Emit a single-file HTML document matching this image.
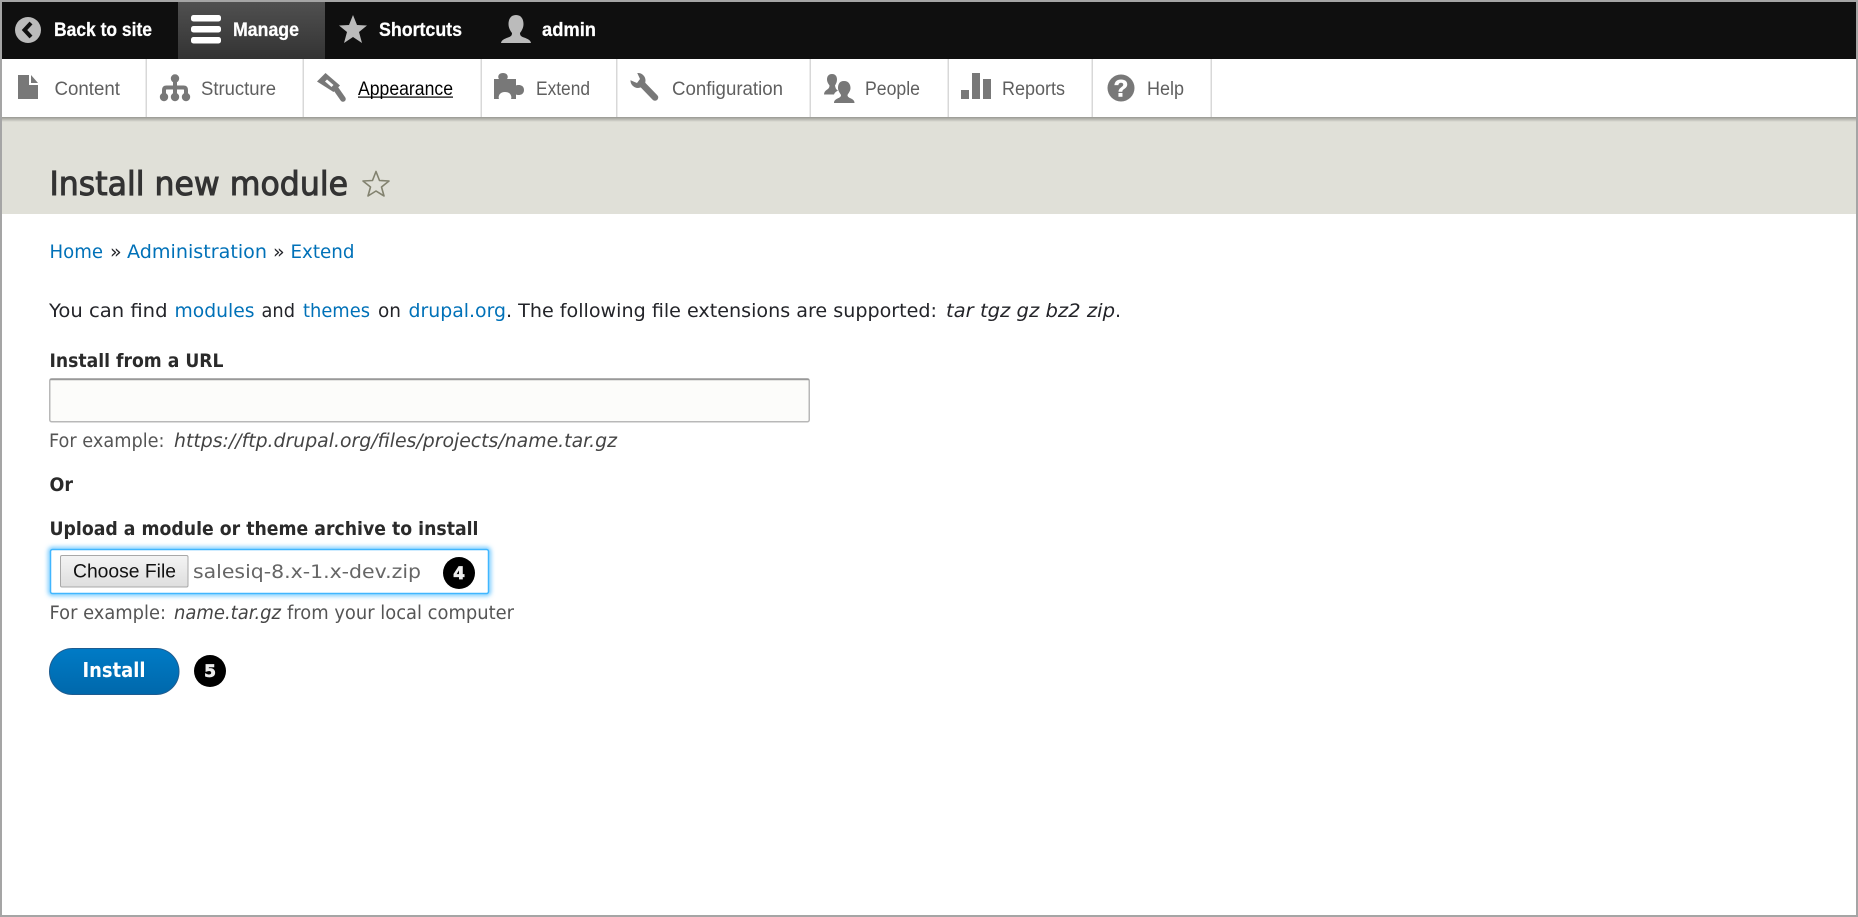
<!DOCTYPE html>
<html lang="en">
<head>
<meta charset="utf-8">
<title>Install new module</title>
<style>
html,body{margin:0;padding:0;width:1858px;height:917px;overflow:hidden;background:#fff}
svg{display:block;position:absolute;left:0;top:0}
text{white-space:pre}
.top{font:bold 19px "Liberation Sans",sans-serif;fill:#fff;stroke:#fff;stroke-width:.25}
.nav{font:19.5px "Liberation Sans",sans-serif;fill:#5f5f5f}
.b{font:19px "DejaVu Sans",sans-serif;fill:#232429}
.i{font:italic 19px "DejaVu Sans",sans-serif;fill:#232429}
.a{font:19px "DejaVu Sans",sans-serif;fill:#0071b8}
.l{font:bold 19px "DejaVu Sans",sans-serif;fill:#2a2a2a}
.d{font:18.5px "DejaVu Sans",sans-serif;fill:#555}
.di{font:italic 18.5px "DejaVu Sans",sans-serif;fill:#444}
.ic{fill:#787878}
</style>
</head>
<body>
<svg width="1858" height="917" viewBox="0 0 1858 917" xmlns="http://www.w3.org/2000/svg">
<defs>
<linearGradient id="mg" x1="0" y1="0" x2="0" y2="1"><stop offset="0" stop-color="#505050"/><stop offset="1" stop-color="#333"/></linearGradient>
<linearGradient id="sh" x1="0" y1="0" x2="0" y2="1"><stop offset="0" stop-color="#989892"/><stop offset="1" stop-color="#e0e0d8"/></linearGradient>
<linearGradient id="bt" x1="0" y1="0" x2="0" y2="1"><stop offset="0" stop-color="#007bc6"/><stop offset="1" stop-color="#0068ab"/></linearGradient>
<linearGradient id="cf" x1="0" y1="0" x2="0" y2="1"><stop offset="0" stop-color="#f4f4f4"/><stop offset="1" stop-color="#dedede"/></linearGradient>
<filter id="gl" x="-5%" y="-30%" width="110%" height="160%"><feGaussianBlur stdDeviation="2.5"/></filter>
</defs>

<rect width="1858" height="917" fill="#fff"/>

<!-- top bar -->
<rect x="0" y="2" width="1858" height="57" fill="#0f0f0f"/>
<rect x="178" y="2" width="147" height="57" fill="url(#mg)"/>
<circle cx="28" cy="30" r="13" fill="#bbb"/>
<path d="M31 23 L24.500 30 L31 37" fill="none" stroke="#0f0f0f" stroke-width="4"/>
<rect x="191" y="15" width="30" height="6.500" rx="2.500" fill="#fff"/>
<rect x="191" y="26" width="30" height="6.500" rx="2.500" fill="#fff"/>
<rect x="191" y="37" width="30" height="6.500" rx="2.500" fill="#fff"/>
<polygon points="353,15 357,25 367,25.500 359,32 362,43 353,37 344,43 347,32 339,25.500 349,25" fill="#bbb"/>
<path d="M516 15C510.500 15 508.500 19.500 508.500 24C508.500 28 510.500 31 512 33C512 35.500 511 36.500 508 37.500C504 39 501.500 40 501 43H531C530.500 40 528 39 524 37.500C521 36.500 520 35.500 520 33C521.500 31 523.500 28 523.500 24C523.500 19.500 521.500 15 516 15Z" fill="#bbb"/>
<text class="top" x="54" y="36" textLength="98" lengthAdjust="spacingAndGlyphs">Back to site</text>
<text class="top" x="233" y="36" textLength="66" lengthAdjust="spacingAndGlyphs">Manage</text>
<text class="top" x="379" y="36" textLength="83" lengthAdjust="spacingAndGlyphs">Shortcuts</text>
<text class="top" x="542" y="36" textLength="54" lengthAdjust="spacingAndGlyphs">admin</text>

<!-- nav -->
<rect x="0" y="59" width="1858" height="58" fill="#fff"/>
<g fill="#d8d8d8">
<rect x="145.500" y="59" width="1.500" height="58"/>
<rect x="302.500" y="59" width="1.500" height="58"/>
<rect x="480.500" y="59" width="1.500" height="58"/>
<rect x="616" y="59" width="1.500" height="58"/>
<rect x="809.500" y="59" width="1.500" height="58"/>
<rect x="947.500" y="59" width="1.500" height="58"/>
<rect x="1091.500" y="59" width="1.500" height="58"/>
<rect x="1210.500" y="59" width="1.500" height="58"/>
</g>
<!-- content -->
<path class="ic" d="M18 75H29V85H38V99H18Z"/><path class="ic" d="M31 75L38 83H31Z"/>
<!-- structure -->
<g class="ic"><circle cx="175" cy="78.500" r="4.200"/><circle cx="164" cy="97" r="4.200"/><circle cx="175" cy="97" r="4.200"/><circle cx="186" cy="97" r="4.200"/></g>
<path d="M175 79V97M164 97V90Q164 87.500 166.500 87.500H183.500Q186 87.500 186 90V97" fill="none" stroke="#787878" stroke-width="4"/>
<!-- appearance -->
<path class="ic" d="M317 81.500L325.500 73L340 85.500L333.500 92Z"/>
<path d="M325 81.500L327 79.500L333.500 85L331.500 87Z" fill="#fff"/>
<path d="M336 89L343 99" stroke="#787878" stroke-width="5.500" stroke-linecap="round"/>
<!-- extend -->
<path class="ic" d="M494 79H499C497.500 77.500 498 73 503 73C508 73 508.500 77.500 507 79H516V85.500C518 84.500 524 84.500 524 90C524 95.500 518 95.500 516 94.500V99H511C512 97 511 92 505 92C499 92 498 97 499 99H494Z"/>
<!-- config -->
<circle class="ic" cx="638" cy="80.500" r="7.500"/>
<path d="M641 83L655 97.500" stroke="#787878" stroke-width="6.500" stroke-linecap="round"/>
<polygon points="637,72.500 640,79 637,83 630,80 625,70 630,66" fill="#fff"/>
<!-- people -->
<path class="ic" d="M832 74C828 74 827 77 827 79.500C827 82 828.500 84 829.500 85.500C829.500 88 828 89 826.500 90C825 91 824 92.500 824 94.500H834C835 92 836.500 91.500 838 90.500C836 89.500 835.500 88 835 85.500C836 84 837 82 837 79.500C837 77 836 74 832 74Z"/>
<path class="ic" d="M844 81C839 81 838 85 838 88C838 91 840 93 841 95C841 97 839.500 97.500 837.500 98.500C835.500 99.500 834 100.500 834 103H854.500C854.500 100.500 853 99.500 851 98.500C849 97.500 847.500 97 847.500 95C848.500 93 850.500 91 850.500 88C850.500 85 849 81 844 81Z"/>
<!-- reports -->
<rect class="ic" x="961" y="90" width="8" height="9"/>
<rect class="ic" x="972" y="73" width="8" height="26"/>
<rect class="ic" x="983" y="79" width="8" height="20"/>
<!-- help -->
<circle class="ic" cx="1121" cy="88" r="13.500"/>
<text x="1121" y="96.500" text-anchor="middle" style="font:bold 24px 'Liberation Sans',sans-serif;fill:#fff;stroke:#fff;stroke-width:.6">?</text>

<text class="nav" x="54.500" y="95" textLength="65.500" lengthAdjust="spacingAndGlyphs">Content</text>
<text class="nav" x="201" y="95" textLength="75" lengthAdjust="spacingAndGlyphs">Structure</text>
<text class="nav" x="358" y="95" textLength="95" lengthAdjust="spacingAndGlyphs" style="fill:#000">Appearance</text>
<rect x="358" y="96.500" width="95" height="1.200" fill="#000"/>
<text class="nav" x="536" y="95" textLength="54" lengthAdjust="spacingAndGlyphs">Extend</text>
<text class="nav" x="672" y="95" textLength="111" lengthAdjust="spacingAndGlyphs">Configuration</text>
<text class="nav" x="865" y="95" textLength="55" lengthAdjust="spacingAndGlyphs">People</text>
<text class="nav" x="1002" y="95" textLength="63" lengthAdjust="spacingAndGlyphs">Reports</text>
<text class="nav" x="1147" y="95" textLength="37" lengthAdjust="spacingAndGlyphs">Help</text>

<!-- header -->
<rect x="0" y="117" width="1858" height="97" fill="#e0e0d8"/>
<rect x="0" y="117" width="1858" height="5" fill="url(#sh)"/>
<text x="49.500" y="195" textLength="298.500" lengthAdjust="spacingAndGlyphs" style="font:33px 'DejaVu Sans',sans-serif;fill:#333;stroke:#333;stroke-width:1">Install new module</text>
<polygon points="376,171.500 379.500,180.500 389,181 381.500,187 384,196 376,191 368,196 370.500,187 363,181 372.500,180.500" fill="none" stroke="#82826f" stroke-width="1.600" stroke-linejoin="round"/>

<!-- breadcrumb -->
<text class="a" x="49.500" y="258" textLength="53.500" lengthAdjust="spacingAndGlyphs">Home</text>
<text class="b" x="110" y="258">»</text>
<text class="a" x="127" y="258" textLength="140" lengthAdjust="spacingAndGlyphs">Administration</text>
<text class="b" x="273" y="258">»</text>
<text class="a" x="290.500" y="258" textLength="64" lengthAdjust="spacingAndGlyphs">Extend</text>

<!-- paragraph -->
<text class="b" x="49" y="317" textLength="118.500" lengthAdjust="spacingAndGlyphs">You can find</text>
<text class="a" x="174.500" y="317" textLength="80" lengthAdjust="spacingAndGlyphs">modules</text>
<text class="b" x="261.500" y="317" textLength="33.500" lengthAdjust="spacingAndGlyphs">and</text>
<text class="a" x="303" y="317" textLength="67" lengthAdjust="spacingAndGlyphs">themes</text>
<text class="b" x="378" y="317" textLength="23" lengthAdjust="spacingAndGlyphs">on</text>
<text class="a" x="408.500" y="317" textLength="97.500" lengthAdjust="spacingAndGlyphs">drupal.org</text>
<text class="b" x="506" y="317" textLength="431" lengthAdjust="spacingAndGlyphs">. The following file extensions are supported:</text>
<text class="i" x="946" y="317" textLength="169" lengthAdjust="spacingAndGlyphs">tar tgz gz bz2 zip</text>
<text class="b" x="1115" y="317">.</text>

<!-- url field -->
<text class="l" x="49.500" y="367" textLength="174" lengthAdjust="spacingAndGlyphs">Install from a URL</text>
<rect x="49.750" y="378.750" width="759.500" height="43" rx="2" fill="#fcfcfa" stroke="#b8b8b8" stroke-width="1.500"/>
<path d="M50 379.500H809" stroke="#999" stroke-width="1.500"/>
<text class="d" x="49" y="447" textLength="115.500" lengthAdjust="spacingAndGlyphs">For example:</text>
<text class="di" x="174" y="447" textLength="443" lengthAdjust="spacingAndGlyphs">https://ftp.drupal.org/files/projects/name.tar.gz</text>
<text class="l" x="49.500" y="491" textLength="23.500" lengthAdjust="spacingAndGlyphs">Or</text>

<!-- upload field -->
<text class="l" x="49.500" y="535" textLength="429" lengthAdjust="spacingAndGlyphs">Upload a module or theme archive to install</text>
<rect x="50" y="549" width="439" height="45" rx="2" fill="none" stroke="#40b6ff" stroke-width="3" filter="url(#gl)"/>
<rect x="50.500" y="549.500" width="438" height="44" rx="2" fill="#fff" stroke="#40b6ff" stroke-width="1.500"/>
<rect x="60.500" y="555.500" width="127.500" height="31.500" rx="1.500" fill="url(#cf)" stroke="#a8a8a8"/>
<text x="73" y="577.500" textLength="103" lengthAdjust="spacingAndGlyphs" style="font:19px 'Liberation Sans',sans-serif;fill:#111">Choose File</text>
<text class="d" x="193" y="578" textLength="228" lengthAdjust="spacingAndGlyphs" style="font-size:19px;fill:#666">salesiq-8.x-1.x-dev.zip</text>
<circle cx="459" cy="573" r="16" fill="#000"/>
<text x="459" y="579" text-anchor="middle" style="font:bold 17px 'DejaVu Sans',sans-serif;fill:#eee;stroke:#eee;stroke-width:.7">4</text>
<text class="d" x="49.500" y="619" textLength="116.500" lengthAdjust="spacingAndGlyphs">For example:</text>
<text class="di" x="174" y="619" textLength="107" lengthAdjust="spacingAndGlyphs">name.tar.gz</text>
<text class="d" x="287" y="619" textLength="227" lengthAdjust="spacingAndGlyphs">from your local computer</text>

<!-- install -->
<rect x="49.500" y="648.500" width="129.500" height="46" rx="23" fill="url(#bt)" stroke="#1e5c90"/>
<text x="82.500" y="677" textLength="63" lengthAdjust="spacingAndGlyphs" style="font:bold 20px 'DejaVu Sans',sans-serif;fill:#fff">Install</text>
<circle cx="210" cy="671" r="16" fill="#000"/>
<text x="210" y="677" text-anchor="middle" style="font:bold 17px 'DejaVu Sans',sans-serif;fill:#eee;stroke:#eee;stroke-width:.7">5</text>

<!-- frame -->
<rect x="1" y="1" width="1856" height="915" fill="none" stroke="#a5a5a5" stroke-width="2"/>
</svg>
</body>
</html>
